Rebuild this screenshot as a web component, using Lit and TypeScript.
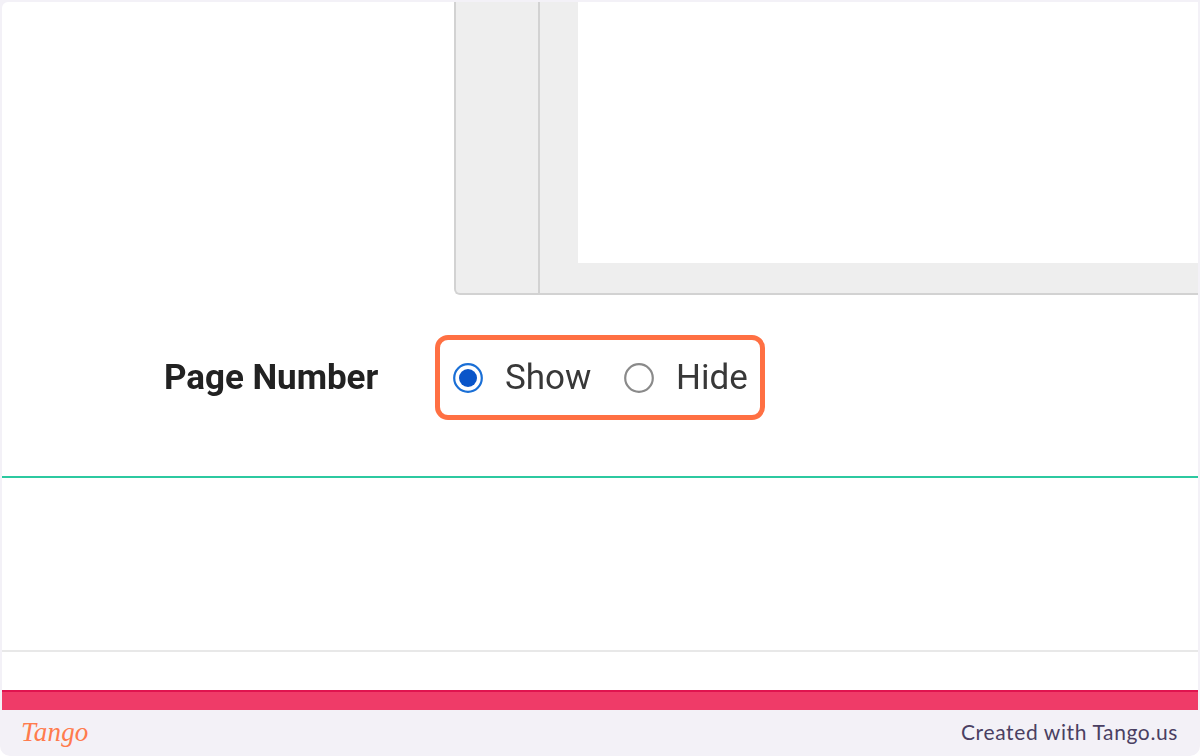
import { LitElement, html, css } from "lit";
import { customElement } from "lit/decorators.js";

@customElement("app-root")
export class AppRoot extends LitElement {
  static styles = css`
    :host { display: block; width: 1200px; height: 756px; background: #fff; overflow: hidden; }
    .page { height: 756px; background: #f3f1f7; border-radius: 0 0 10px 10px; display: flex; flex-direction: column; }
    .frame { margin: 2px 2px 0; height: 708px; background: #fff; display: flex; flex-direction: column; border-radius: 6px 6px 0 0; }
    .editor { margin-left: 452px; height: 293px; box-sizing: border-box; background: #eeeeee; border-left: 2px solid #d2d2d2; border-bottom: 2px solid #d2d2d2; border-bottom-left-radius: 6px; display: flex; }
    .gutter { width: 82px; border-right: 2px solid #d2d2d2; }
    .sheetwrap { flex: 1; padding-left: 38px; padding-bottom: 30px; display: flex; }
    .sheet { flex: 1; background: #fff; }
    .row { height: 181px; box-sizing: border-box; padding: 40px 0 0 162px; display: flex; align-items: flex-start; font-family: Roboto, sans-serif; color: #222; }
    .label { width: 271px; height: 85px; line-height: 85px; font-size: 35px; font-weight: 700; color: #222; letter-spacing: -0.05px; filter: blur(0.5px); }
    .group { box-sizing: border-box; width: 330px; height: 85px; border: 5px solid #ff7043; border-radius: 13px; display: flex; align-items: center; padding-left: 13px; }
    .radio { width: 30px; height: 30px; flex: none; filter: blur(0.4px); }
    .text { font-size: 35px; line-height: 73px; font-weight: 400; color: #383838; margin-left: 22px; filter: blur(0.5px); }
    .show { width: 86px; }
    .second { margin-left: 33px; }
    .green { height: 2px; background: #2cc9a0; flex: none; }
    .blank { height: 172px; flex: none; }
    .grey { height: 2px; background: #e8e8e8; flex: none; }
    .blank2 { height: 38px; flex: none; }
    .pink { height: 20px; box-sizing: border-box; background: #ef3b68; border-top: 2px solid #e0134f; flex: none; }
    .footer { flex: 1; display: flex; align-items: center; justify-content: space-between; padding: 0 22px 3px 21px; }
    .logo { font-family: "Liberation Serif", serif; font-style: italic; font-size: 27px; color: #ff7b4d; font-weight: 400; letter-spacing: 0.2px; line-height: 42px; }
    .credit { font-family: Lato, sans-serif; font-size: 21px; letter-spacing: 0.62px; color: #4a3f62; line-height: 42px; }
  `;

  render() {
    return html`
      <div class="page">
        <div class="frame">
          <div class="editor">
            <div class="gutter"></div>
            <div class="sheetwrap"><div class="sheet"></div></div>
          </div>
          <div class="row">
            <div class="label">Page Number</div>
            <div class="group">
              <svg class="radio" viewBox="0 0 30 30">
                <circle cx="15" cy="15" r="13.8" fill="#fff" stroke="#1a6fd6" stroke-width="2.2"></circle>
                <circle cx="15" cy="15" r="9" fill="#0a55c9"></circle>
              </svg>
              <span class="text show">Show</span>
              <svg class="radio second" viewBox="0 0 30 30">
                <circle cx="15" cy="15" r="13.8" fill="#fff" stroke="#8a8a8a" stroke-width="2.2"></circle>
              </svg>
              <span class="text">Hide</span>
            </div>
          </div>
          <div class="green"></div>
          <div class="blank"></div>
          <div class="grey"></div>
          <div class="blank2"></div>
          <div class="pink"></div>
        </div>
        <div class="footer">
          <span class="logo">Tango</span>
          <span class="credit">Created with Tango.us</span>
        </div>
      </div>
    `;
  }
}
